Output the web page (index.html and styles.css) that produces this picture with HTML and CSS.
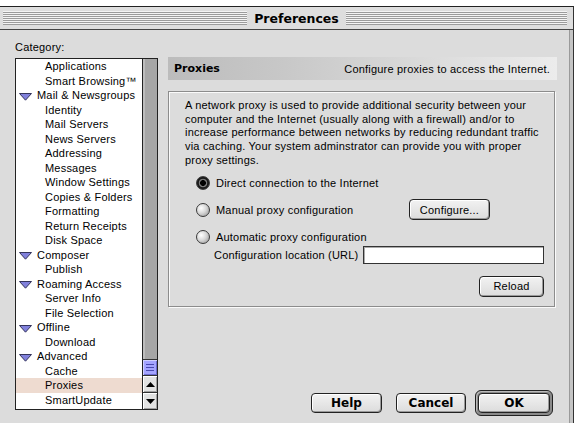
FILE: index.html
```html
<!DOCTYPE html>
<html lang="en">
<head>
  <meta charset="UTF-8" />
  <title>Preferences</title>
  <link rel="stylesheet" href="styles.css">
</head>
<body>
  <div class="window">
    <div class="titlebar">
      <div class="stripes stripes-left"></div>
      <div class="title">Preferences</div>
      <div class="stripes stripes-right"></div>
    </div>

    <div class="content">
      <div class="sidebar">
        <div class="category-label">Category:</div>
        <div class="listbox">
          <ul class="tree">
            <li class="child">Applications</li>
            <li class="child">Smart Browsing™</li>
            <li class="parent"><svg class="twisty" width="13" height="8" viewBox="0 0 13 8"><polygon points="0.5,0.5 12.5,0.5 6.5,7.2"/></svg>Mail &amp; Newsgroups</li>
            <li class="child">Identity</li>
            <li class="child">Mail Servers</li>
            <li class="child">News Servers</li>
            <li class="child">Addressing</li>
            <li class="child">Messages</li>
            <li class="child">Window Settings</li>
            <li class="child">Copies &amp; Folders</li>
            <li class="child">Formatting</li>
            <li class="child">Return Receipts</li>
            <li class="child">Disk Space</li>
            <li class="parent"><svg class="twisty" width="13" height="8" viewBox="0 0 13 8"><polygon points="0.5,0.5 12.5,0.5 6.5,7.2"/></svg>Composer</li>
            <li class="child">Publish</li>
            <li class="parent"><svg class="twisty" width="13" height="8" viewBox="0 0 13 8"><polygon points="0.5,0.5 12.5,0.5 6.5,7.2"/></svg>Roaming Access</li>
            <li class="child">Server Info</li>
            <li class="child">File Selection</li>
            <li class="parent"><svg class="twisty" width="13" height="8" viewBox="0 0 13 8"><polygon points="0.5,0.5 12.5,0.5 6.5,7.2"/></svg>Offline</li>
            <li class="child">Download</li>
            <li class="parent"><svg class="twisty" width="13" height="8" viewBox="0 0 13 8"><polygon points="0.5,0.5 12.5,0.5 6.5,7.2"/></svg>Advanced</li>
            <li class="child">Cache</li>
            <li class="child selected">Proxies</li>
            <li class="child">SmartUpdate</li>
          </ul>
          <div class="scrollbar">
            <div class="track"></div>
            <div class="thumb"><span></span><span></span><span></span></div>
            <div class="arrow"><svg width="9" height="5" viewBox="0 0 9 5"><polygon points="4.5,0 9,5 0,5"/></svg></div>
            <div class="arrow"><svg width="9" height="5" viewBox="0 0 9 5"><polygon points="0,0 9,0 4.5,5"/></svg></div>
          </div>
        </div>
      </div>

      <div class="main">
        <div class="panel-header">
          <span class="panel-title">Proxies</span>
          <span class="panel-desc">Configure proxies to access the Internet.</span>
        </div>

        <div class="group">
          <p class="intro">A network proxy is used to provide additional security between your<br>
            computer and the Internet (usually along with a firewall) and/or to<br>
            increase performance between networks by reducing redundant traffic<br>
            via caching. Your system adminstrator can provide you with proper<br>
            proxy settings.</p>

          <div class="opt opt-direct">
            <span class="radio on"></span>
            <span>Direct connection to the Internet</span>
          </div>
          <div class="opt opt-manual">
            <span class="radio"></span>
            <span>Manual proxy configuration</span>
            <button class="btn btn-configure">Configure...</button>
          </div>
          <div class="opt opt-auto">
            <span class="radio"></span>
            <span>Automatic proxy configuration</span>
          </div>
          <div class="url-row">
            <span>Configuration location (URL)</span>
            <input type="text" class="url-input" />
          </div>
          <div class="reload-row">
            <button class="btn btn-reload">Reload</button>
          </div>
        </div>

        <div class="footer">
          <button class="btn btn-big btn-help">Help</button>
          <button class="btn btn-big btn-cancel">Cancel</button>
          <div class="default-ring">
            <button class="btn btn-big btn-ok">OK</button>
          </div>
        </div>
      </div>
    </div>
  </div>
</body>
</html>
```

FILE: styles.css
```css
body {
  margin: 0;
  background-color: #fff;
  font-family: "Liberation Sans", Arial, sans-serif;
  font-size: 11px;
  letter-spacing: 0.2px;
  color: #000;
}
.window {
  margin-top: 6px;
  width: 573px;
  height: 417px;
  border-top: 1px solid #222;
  border-right: 1px solid #333;
  background-color: #dcdcdc;
  box-shadow: inset -3px 0 0 #c4c4c4, inset -4px 0 0 #9a9a9a;
}
.titlebar {
  height: 22px;
  padding: 0 6px 0 3px;
  display: flex;
  align-items: center;
  border-bottom: 1px solid #444;
  background-color: #dedede;
}
.stripes {
  flex-basis: 0;
  height: 14px;
  background: repeating-linear-gradient(to bottom, #f4f4f4 0 1px, #9c9c9c 1px 2px);
}
.stripes-left {
  flex-grow: 245;
}
.stripes-right {
  flex-grow: 222;
}
.title {
  padding: 0 7px;
  font-family: "DejaVu Sans", sans-serif;
  font-weight: bold;
  font-size: 12.5px;
  letter-spacing: 0;
}
.content {
  display: flex;
  padding-left: 15px;
}

/* category list */
.sidebar {
  width: 143px;
}
.category-label {
  height: 28px;
  line-height: 14px;
  padding-top: 10px;
  box-sizing: border-box;
}
.listbox {
  display: flex;
  height: 350px;
  border: 1px solid #222;
  background-color: #fff;
}
.tree {
  list-style: none;
  margin: 0;
  padding: 0;
  flex: 1;
}
.tree li {
  height: 14.5px;
  line-height: 14.5px;
  white-space: nowrap;
  display: flex;
  align-items: center;
}
.tree .child {
  padding-left: 29px;
}
.tree .parent {
  padding-left: 2px;
}
.tree .selected {
  background-color: #eedbd0;
}
.twisty {
  margin: 3px 5px 0 1px;
}
.twisty polygon {
  fill: #8181dc;
  stroke: #34345c;
  stroke-width: 1;
}
.scrollbar {
  width: 14px;
  border-left: 1px solid #222;
  display: flex;
  flex-direction: column;
}
.track {
  flex: 1;
  background-color: #a6a6a6;
  box-shadow: inset 2px 0 0 #bdbdbd;
}
.thumb {
  height: 15px;
  border-top: 1px solid #333;
  background-color: #a4a4ff;
  box-shadow: inset 1px 1px 0 #d0d0ff, inset -1px -1px 0 #6c6cd0;
  display: flex;
  flex-direction: column;
  justify-content: center;
  gap: 2px;
  padding: 0 3px;
}
.thumb span {
  height: 1px;
  background-color: #4a4ab0;
}
.arrow {
  height: 16px;
  border-top: 1px solid #333;
  background-color: #e2e2e2;
  box-shadow: inset 1px 1px 0 #fff, inset -1px -1px 0 #a0a0a0;
  display: flex;
  align-items: center;
  justify-content: center;
}
.arrow polygon {
  fill: #000;
}

/* right panel */
.main {
  width: 389px;
  margin-left: 10px;
  padding-top: 27px;
  display: flex;
  flex-direction: column;
}
.panel-header {
  height: 23px;
  padding: 0 7px 0 6px;
  display: flex;
  align-items: center;
  justify-content: space-between;
  background: linear-gradient(to right, #bcbcbc, #c8c8c8 30%, #ececec);
}
.panel-title {
  font-family: "DejaVu Sans", sans-serif;
  font-weight: bold;
  font-size: 11px;
  letter-spacing: 0;
}
.group {
  margin-top: 11px;
  margin-right: 2px;
  height: 216px;
  box-sizing: border-box;
  padding: 7px 10px 0 16px;
  border: 1px solid #8c8c8c;
  box-shadow: inset 1px 1px 0 #fafafa, 1px 1px 0 #fafafa;
}
.intro {
  margin: 0;
  line-height: 13.7px;
  white-space: nowrap;
}
.opt {
  height: 22px;
  display: flex;
  align-items: center;
  padding-left: 11px;
}
.opt-direct {
  margin-top: 4px;
}
.opt-manual {
  margin-top: 5px;
}
.opt-auto {
  height: 18px;
  margin-top: 7px;
}
.radio {
  width: 12px;
  height: 12px;
  margin-right: 6px;
  border-radius: 50%;
  border: 1px solid #3a3a3a;
  background: radial-gradient(circle at 35% 35%, #ffffff, #d8d8d8 45%, #8e8e8e);
}
.radio.on {
  background: radial-gradient(circle, #000 0 2.6px, #7a7a7a 3.2px 4px, #1a1a1a 4.6px);
}
.url-row {
  height: 18px;
  display: flex;
  align-items: center;
  padding-left: 29px;
}
.url-input {
  margin-left: auto;
  width: 181px;
  height: 18px;
  box-sizing: border-box;
  border: 1px solid #333;
  box-shadow: inset 1px 1px 0 #aaa;
  background-color: #fff;
  outline: none;
}
.reload-row {
  margin-top: 12px;
  display: flex;
  justify-content: flex-end;
}
.btn {
  height: 21px;
  padding: 0;
  border: 1px solid #222;
  border-radius: 4px;
  background: linear-gradient(to bottom, #f2f2f2, #dcdcdc);
  box-shadow: inset 1px 1px 0 #fff, inset -1px -1px 0 #9a9a9a;
  font-family: "Liberation Sans", Arial, sans-serif;
  font-size: 11px;
  letter-spacing: 0.2px;
  color: #000;
}
.btn-configure {
  width: 81px;
  margin-left: auto;
  margin-right: 54px;
}
.btn-reload {
  width: 65px;
}
.footer {
  margin-top: 83px;
  padding-right: 4px;
  display: flex;
  justify-content: flex-end;
  align-items: center;
}
.btn-big {
  height: 20px;
  font-family: "DejaVu Sans", sans-serif;
  font-weight: bold;
  font-size: 12px;
  letter-spacing: 0;
}
.btn-help {
  width: 71px;
  margin-right: 14px;
}
.btn-cancel {
  width: 70px;
  margin-right: 9px;
}
.default-ring {
  width: 78px;
  height: 26px;
  box-sizing: border-box;
  padding: 2px;
  border: 1px solid #222;
  border-radius: 6px;
  background-color: #8a8a8a;
  box-shadow: inset 1px 1px 0 #bbb;
  display: flex;
}
.btn-ok {
  flex: 1;
  height: auto;
}
```
